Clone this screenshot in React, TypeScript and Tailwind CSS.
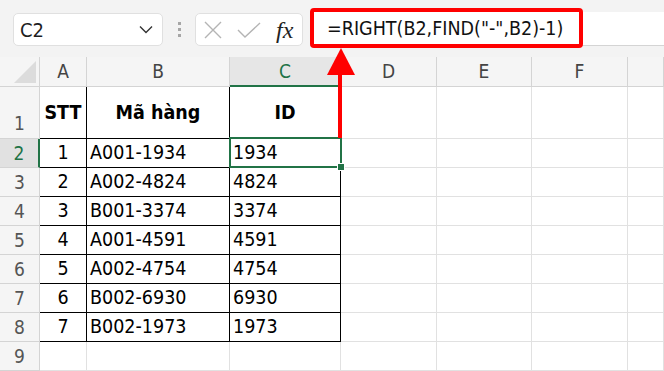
import React from 'react';

const cols = [
  { key: 'A', w: 'w-[47px]' },
  { key: 'B', w: 'w-[143px]' },
  { key: 'C', w: 'w-[111px]' },
  { key: 'D', w: 'w-[96px]' },
  { key: 'E', w: 'w-[95px]' },
  { key: 'F', w: 'w-[96px]' },
  { key: 'G', w: 'w-[36px]' },
];

const rows = [
  ['1', 'A001-1934', '1934'],
  ['2', 'A002-4824', '4824'],
  ['3', 'B001-3374', '3374'],
  ['4', 'A001-4591', '4591'],
  ['5', 'A002-4754', '4754'],
  ['6', 'B002-6930', '6930'],
  ['7', 'B002-1973', '1973'],
];

const font = "font-['Liberation_Sans_Narrow','DejaVu_Sans_Condensed','Liberation_Sans',sans-serif]";

const Cell = ({ col, text, black, bold, align }: { col: number; text?: string; black?: boolean; bold?: boolean; align?: 'center' | 'left' }) => (
  <div
    className={`${cols[col].w} shrink-0 h-full border-r border-b flex items-center ${black ? 'border-black' : 'border-[#e1e1e1]'} ${align === 'center' ? 'justify-center' : 'pl-[3px]'} ${bold ? 'font-bold' : ''}`}
  >
    {text}
  </div>
);

export default function App() {
  return (
    <div className={`relative w-[664px] h-[371px] overflow-hidden bg-white ${font} text-black`}>
      {/* formula bar */}
      <div className="h-[57px] bg-[#f3f3f3] flex items-start pt-[13px]">
        <div className="ml-[13px] w-[150px] h-[33px] bg-white border border-[#e0e0e0] rounded-[5px] flex items-center justify-between pl-[6px] pr-[9px]">
          <span className="text-[20px] text-[#1e1e1e]">C2</span>
          <svg width="14" height="9" viewBox="0 0 14 9" fill="none" stroke="#333" strokeWidth="1.4">
            <path d="M1 1.5 L7 7.5 L13 1.5" />
          </svg>
        </div>
        <div className="w-[32px] h-[33px] flex flex-col items-center justify-center gap-[3px]">
          <span className="w-[3px] h-[3px] bg-[#a6a6a6]" />
          <span className="w-[3px] h-[3px] bg-[#a6a6a6]" />
          <span className="w-[3px] h-[3px] bg-[#a6a6a6]" />
        </div>
        <div className="w-[108px] h-[33px] bg-white border border-[#e0e0e0] rounded-[5px] flex items-center pl-[8px]">
          <svg width="18" height="18" viewBox="0 0 18 18" stroke="#b4b4b4" strokeWidth="1.4" fill="none">
            <path d="M1 1 L17 17 M17 1 L1 17" />
          </svg>
          <svg className="ml-[15px]" width="24" height="16" viewBox="0 0 24 16" stroke="#b4b4b4" strokeWidth="1.4" fill="none">
            <path d="M1 8 L8 15 L23 1" />
          </svg>
          <span className="ml-[15px] text-[24px] italic font-['Liberation_Serif',serif] text-[#222] leading-none">fx</span>
        </div>
        <div className="ml-[7px] flex-1 h-[34px] -mt-[1px] bg-white border-b border-[#d4d4d4] flex items-center pl-[17px]">
          <span className="text-[19.5px] text-[#111]">=RIGHT(B2,FIND("-",B2)-1)</span>
        </div>
      </div>

      {/* column headers */}
      <div className="flex h-[30px] bg-[#f5f5f5] text-[19px] text-[#444]">
        <div className="w-[40px] shrink-0 h-full border-r border-b border-[#d4d4d4] flex items-end justify-end p-[3px]">
          <svg width="22" height="22" viewBox="0 0 22 22">
            <path d="M22 0 L22 22 L0 22 Z" fill="#dcdcdc" />
          </svg>
        </div>
        {cols.map((c) => (
          <div
            key={c.key}
            className={`${c.w} shrink-0 h-full flex items-center justify-center border-r ${c.key === 'C' ? 'bg-[#e6e6e6] text-[#217346] border-b-2 border-b-[#217346] border-r-[#d4d4d4]' : 'border-b border-[#d4d4d4]'}`}
          >
            {c.key !== 'G' ? c.key : ''}
          </div>
        ))}
      </div>

      {/* row 1 */}
      <div className="flex h-[52px] text-[19.5px]">
        <div className="w-[40px] shrink-0 h-full bg-[#f5f5f5] border-r border-b border-[#d4d4d4] flex items-end justify-center pb-[1px] text-[#555] text-[19px]">1</div>
        <Cell col={0} text="STT" black bold align="center" />
        <Cell col={1} text="Mã hàng" black bold align="center" />
        <Cell col={2} text="ID" black bold align="center" />
        <Cell col={3} />
        <Cell col={4} />
        <Cell col={5} />
        <Cell col={6} />
      </div>

      {rows.map((r, i) => (
        <div key={i} className="flex h-[29px] text-[19.5px]">
          <div
            className={`w-[40px] shrink-0 h-full border-b border-[#d4d4d4] flex items-center justify-center text-[19px] ${i === 0 ? 'bg-[#e1e1e1] text-[#217346] border-r-2 border-r-[#217346]' : 'bg-[#f5f5f5] text-[#555] border-r'}`}
          >
            {i + 2}
          </div>
          <Cell col={0} text={r[0]} black align="center" />
          <Cell col={1} text={r[1]} black />
          <Cell col={2} text={r[2]} black />
          <Cell col={3} />
          <Cell col={4} />
          <Cell col={5} />
          <Cell col={6} />
        </div>
      ))}

      <div className="flex h-[29px] text-[19.5px]">
        <div className="w-[40px] shrink-0 h-full bg-[#f5f5f5] border-r border-b border-[#d4d4d4] flex items-center justify-center text-[19px] text-[#555]">9</div>
        {cols.map((c, j) => (
          <Cell key={c.key} col={j} />
        ))}
      </div>

      {/* selection on C2 */}
      <div className="absolute left-[229px] top-[137px] w-[113px] h-[31px] border-2 border-[#217346] pointer-events-none" />
      <div className="absolute left-[338px] top-[164px] w-[6px] h-[6px] bg-[#217346] border border-white box-content -translate-x-[1px] -translate-y-[1px]" />

      {/* red annotation */}
      <div className="absolute left-[310px] top-[8px] w-[273px] h-[40px] border-4 border-[#ff0000] rounded-[4px] pointer-events-none" />
      <svg className="absolute left-0 top-0 pointer-events-none" width="664" height="371">
        <polygon points="341,48 327,75 355,75" fill="#ff0000" />
        <rect x="338" y="74" width="4" height="64" fill="#ff0000" />
      </svg>
    </div>
  );
}
